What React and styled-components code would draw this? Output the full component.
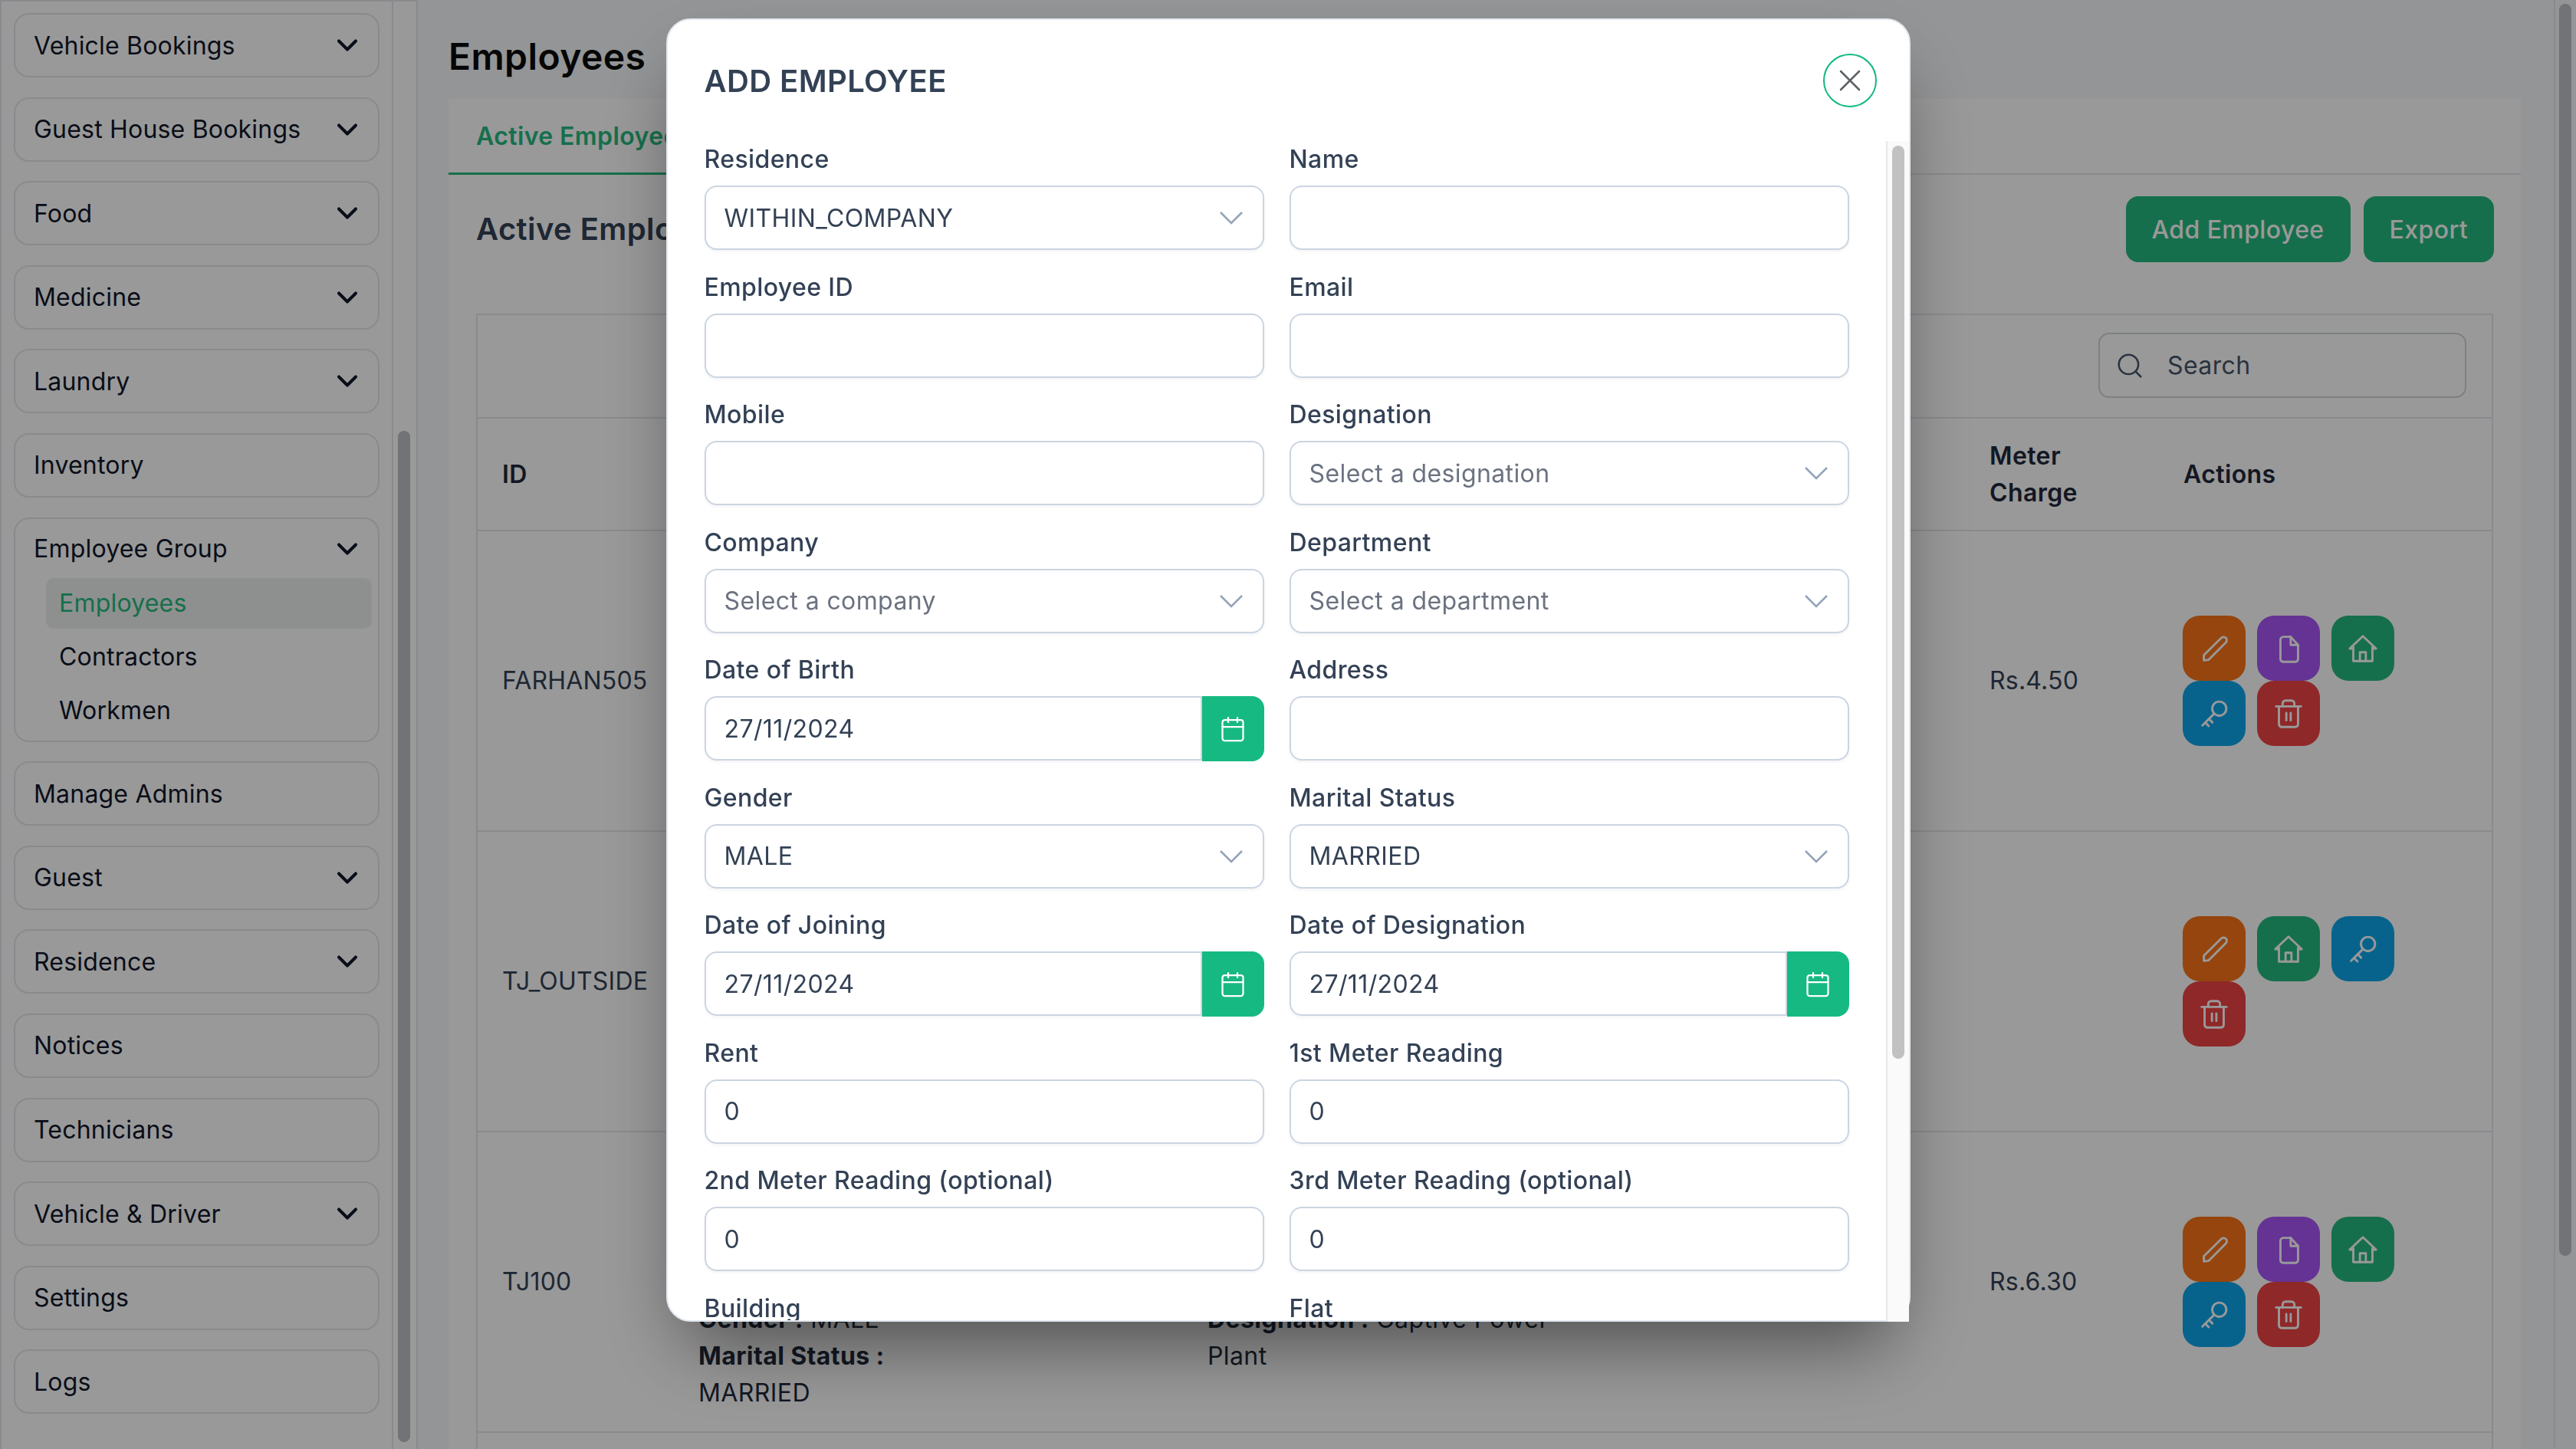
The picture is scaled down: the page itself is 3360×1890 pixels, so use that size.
import React from "react";
import styled, { createGlobalStyle } from "styled-components";
import { Calendar, ChevronDown, Search, X } from "lucide-react";

const GlobalStyle = createGlobalStyle`
  html, body {
    margin: 0;
    height: 100%;
    overflow: hidden;
    font-family: Inter, "Liberation Sans", sans-serif;
    letter-spacing: 0.4px;
    color: #334155;
  }
  * { box-sizing: border-box; }
  input, select, button { letter-spacing: inherit; }
`;

const GREEN = "#25b97f";

const Page = styled.div`
  width: 3360px;
  height: 1890px;
  display: flex;
  background: #f7f8fa;
  overflow: hidden;
`;

const Sidebar = styled.aside`
  width: 545px;
  height: 100%;
  flex: none;
  display: flex;
  background: #fff;
  border-top: 2px solid #e5e7eb;
  border-left: 2px solid #e5e7eb;
  border-right: 2px solid #e5e7eb;
`;

const SideNav = styled.nav`
  width: 511px;
  flex: none;
  display: flex;
  flex-direction: column;
  gap: 25.6px;
  padding: 15px 16px 0;
  letter-spacing: 0.2px;
  border-right: 2px solid #e5e7eb;
`;

const NavItem = styled.div`
  height: 84px;
  flex: none;
  display: flex;
  align-items: center;
  justify-content: space-between;
  padding: 0 18px 0 24px;
  border: 2px solid #e5e7eb;
  border-radius: 20px;
  font-size: 32px;
  color: #0f172a;
`;

const NavGroup = styled.div`
  flex: none;
  height: 293px;
  padding: 0 8px 5px 0;
  border: 2px solid #e5e7eb;
  border-radius: 20px;
  font-size: 32px;
  color: #0f172a;
`;

const GroupHead = styled.div`
  height: 77px;
  padding: 1px 10px 0 24px;
  display: flex;
  align-items: center;
  justify-content: space-between;
`;

const SubList = styled.div`
  display: flex;
  flex-direction: column;
  gap: 4px;
  margin-left: 40px;
`;

const SubItem = styled.div`
  height: 66px;
  display: flex;
  align-items: center;
  padding-left: 17px;
  border-radius: 10px;
  background: ${({ $active }) => ($active ? "#edf1ee" : "transparent")};
  color: ${({ $active }) => ($active ? GREEN : "#0f172a")};
`;

const Rail = styled.div`
  flex: 1;
  padding: 0 6px;
`;

const RailThumb = styled.div`
  width: 16px;
  margin-top: ${({ $top }) => $top}px;
  height: ${({ $height }) => $height}px;
  border-radius: 8px;
  background: #bec0c6;
`;

const PageRail = styled.div`
  width: 29px;
  flex: none;
  padding-left: 5px;
  border-left: 2px solid #e5e7eb;
`;

const Main = styled.main`
  flex: 1;
  min-width: 0;
  padding: 38px 43px 0 40px;
  display: flex;
  flex-direction: column;
`;

const PageTitle = styled.h1`
  margin: 0 0 19px;
  font-size: 48px;
  line-height: 72px;
  font-weight: 600;
  color: #0a0a0a;
`;

const Card = styled.section`
  flex: 1;
  min-height: 0;
  background: #fff;
  overflow: hidden;
`;

const TabBar = styled.div`
  height: 99px;
  display: flex;
  border-bottom: 2px solid #e5e7eb;
`;

const Tab = styled.div`
  height: 99px;
  padding: 0 36px;
  display: flex;
  align-items: center;
  font-size: 32px;
  font-weight: 600;
  color: ${GREEN};
  border-bottom: 3px solid ${GREEN};
`;

const SectionHead = styled.div`
  height: 181px;
  padding: 28px 35px 0 36px;
  display: flex;
  justify-content: space-between;
`;

const SectionTitle = styled.h2`
  margin: 0;
  height: 86px;
  line-height: 86px;
  font-size: 40px;
  font-weight: 600;
  color: #334155;
`;

const HeadButtons = styled.div`
  display: flex;
  gap: 17px;
`;

const GreenButton = styled.button`
  height: 86px;
  padding: 0 34px;
  border: 0;
  border-radius: 16px;
  background: ${GREEN};
  color: #fff;
  font: 500 32px Inter, sans-serif;
`;

const TableBox = styled.div`
  margin: 0 36px 0 36px;
  border: 2px solid #e5e7eb;
`;

const SearchRow = styled.div`
  height: 133px;
  padding: 23px 33px 0 0;
  display: flex;
  justify-content: flex-end;
`;

const SearchBox = styled.div`
  width: 480px;
  height: 85px;
  display: flex;
  align-items: center;
  gap: 30px;
  padding-left: 20px;
  border: 2px solid #d1d5db;
  border-radius: 14px;
  font-size: 32px;
  color: #475569;
`;

const Row = styled.div`
  display: grid;
  grid-template-columns: 256px 1684px 253px 1fr;
  height: ${({ $height }) => $height}px;
  border-top: 2px solid #e5e7eb;
`;

const HeadCell = styled.div`
  padding: 0 32px;
  align-self: center;
  font-size: 32px;
  line-height: 48px;
  font-weight: 600;
  color: #1e293b;
`;

const Cell = styled.div`
  padding: 0 32px;
  align-self: center;
  font-size: 32px;
  line-height: 48px;
  letter-spacing: 0.2px;
  color: #334155;
`;

const DetailsCell = styled.div`
  align-self: end;
  padding: 0 32px 26px;
  display: grid;
  grid-template-columns: 664px 1fr;
  font-size: 32px;
  line-height: 48px;
  color: #1e293b;
`;

const DetailText = styled.div`
  max-width: ${({ $max }) => $max}px;
`;

const Strong = styled.strong`
  font-weight: 700;
`;

const Actions = styled.div`
  display: flex;
  flex-wrap: wrap;
  column-gap: 15px;
  width: 300px;
  margin-left: -1px;
`;

const ActionButton = styled.button`
  width: 82px;
  height: 85px;
  padding: 0;
  border: 0;
  border-radius: 22px;
  display: flex;
  align-items: center;
  justify-content: center;
  color: #fff;
  background: ${({ $bg }) => $bg};
`;

const Overlay = styled.div`
  position: fixed;
  inset: 0;
  display: flex;
  justify-content: center;
  align-items: flex-start;
  padding-top: 24px;
  background: rgba(0, 0, 0, 0.4);
`;

const Modal = styled.div`
  width: 1623px;
  height: 1700px;
  display: flex;
  flex-direction: column;
  background: #fff;
  border: 2px solid #e2e8f0;
  border-radius: 32px;
  box-shadow: 0 50px 100px -24px rgba(0, 0, 0, 0.5);
`;

const ModalHead = styled.div`
  height: 158px;
  flex: none;
  display: flex;
  align-items: center;
  justify-content: space-between;
  padding: 0 42px 0 48px;
`;

const ModalTitle = styled.h3`
  margin: 0;
  font-size: 40px;
  font-weight: 600;
  color: #334155;
`;

const CloseButton = styled.button`
  width: 70px;
  height: 70px;
  padding: 0;
  border: 2px solid #10b981;
  border-radius: 50%;
  background: #fff;
  color: #5f6368;
  display: flex;
  align-items: center;
  justify-content: center;
`;

const ModalBody = styled.div`
  flex: 1;
  min-height: 0;
  display: flex;
`;

const FormScroll = styled.div`
  flex: 1;
  min-width: 0;
  overflow: hidden;
  padding-left: 48px;
`;

const FormRail = styled.div`
  width: 30px;
  flex: none;
  margin-bottom: -2px;
  padding-left: 6px;
  background: #fafafa;
  border-left: 2px solid #e8e8e8;
`;

const FormThumb = styled.div`
  width: 16px;
  height: 1191px;
  margin-top: 6px;
  border-radius: 8px;
  background: #c1c1c1;
`;

const FormGrid = styled.div`
  display: grid;
  grid-template-columns: 730px 730px;
  column-gap: 33px;
  row-gap: 24.5px;
`;

const Field = styled.div`
  display: flex;
  flex-direction: column;
`;

const Label = styled.label`
  height: 48px;
  margin-bottom: 10px;
  font-size: 32px;
  line-height: 48px;
  font-weight: 500;
  color: #334155;
`;

const controlCss = `
  width: 100%;
  height: 84px;
  padding: 0 24px;
  background: #fff;
  border: 2px solid #cbd5e1;
  border-radius: 16px;
  box-shadow: 0 2px 4px rgba(15, 23, 42, 0.05);
  font: 400 32px Inter, sans-serif;
  color: #334155;
  outline: none;
`;

const TextInput = styled.input`
  ${controlCss}
`;

const SelectWrap = styled.div`
  position: relative;
  height: 84px;
`;

const Select = styled.select`
  ${controlCss}
  appearance: none;
  color: ${({ $placeholder }) => ($placeholder ? "#6b7280" : "#334155")};
`;

const SelectArrow = styled.svg`
  position: absolute;
  right: 28px;
  top: 34px;
  width: 30px;
  height: 17px;
  fill: none;
  stroke: #94a3b8;
  stroke-width: 2.6;
  pointer-events: none;
`;

const DateRow = styled.div`
  display: flex;
  height: 84px;
`;

const DateInput = styled.input`
  ${controlCss}
  flex: 1;
  min-width: 0;
  border-radius: 16px 0 0 16px;
`;

const DateButton = styled.button`
  width: 81px;
  height: 85px;
  flex: none;
  padding: 0;
  border: 0;
  border-radius: 0 16px 16px 0;
  background: #16b981;
  color: #fff;
  display: flex;
  align-items: center;
  justify-content: center;
`;

const ActionIcon = styled.svg`
  width: 46px;
  height: 46px;
  fill: none;
  stroke: currentColor;
  stroke-width: 1.5;
  stroke-linecap: round;
  stroke-linejoin: round;
`;

const ICONS = {
  edit: (
    <>
      <path d="M5 20v-3.6L17 4.6a2.2 2.2 0 0 1 3.1 3.1L8.3 19.6 5 20z" />
    </>
  ),
  file: (
    <>
      <path d="M13.5 4H8.5A2 2 0 0 0 6.500 6v13a2 2 0 0 0 2 2h8a2 2 0 0 0 2-2V9.500z" />
      <path d="M13.500 4v5.500h5" />
    </>
  ),
  home: (
    <>
      <path d="M4.500 12H3l9-8.500 9 8.500h-1.500" />
      <path d="M5.500 11v9.500h13V11" />
      <path d="M10 20.500v-6h4v6" />
    </>
  ),
  key: (
    <>
      <circle cx="15.500" cy="8.500" r="4.800" />
      <path d="M11.800 12.200 4 20" />
      <path d="M8.500 15.500l2.300 2.300" />
      <path d="M6 18l2.300 2.300" />
    </>
  ),
  trash: (
    <>
      <path d="M3.500 7h17" />
      <path d="M5.500 7v12a2 2 0 0 0 2 2h9a2 2 0 0 0 2-2V7" />
      <path d="M8 7V5a2 2 0 0 1 2-2h4a2 2 0 0 1 2 2v2" />
      <path d="M10.500 11.500v5" />
      <path d="M13.500 11.500v5" />
    </>
  ),
};

const ACTION_COLORS = {
  edit: "#f97316",
  file: "#a855f7",
  home: GREEN,
  key: "#0ea5e9",
  trash: "#ef4444",
};

const NAV_TOP = [
  ["Vehicle Bookings", true],
  ["Guest House Bookings", true],
  ["Food", true],
  ["Medicine", true],
  ["Laundry", true],
  ["Inventory", false],
];

const NAV_BOTTOM = [
  ["Manage Admins", false],
  ["Guest", true],
  ["Residence", true],
  ["Notices", false],
  ["Technicians", false],
  ["Vehicle & Driver", true],
  ["Settings", false],
  ["Logs", false],
];

const FIELDS = [
  { label: "Residence", type: "select", value: "WITHIN_COMPANY" },
  { label: "Name" },
  { label: "Employee ID" },
  { label: "Email" },
  { label: "Mobile" },
  { label: "Designation", type: "select", placeholder: "Select a designation" },
  { label: "Company", type: "select", placeholder: "Select a company" },
  { label: "Department", type: "select", placeholder: "Select a department" },
  { label: "Date of Birth", type: "date", value: "27/11/2024" },
  { label: "Address" },
  { label: "Gender", type: "select", value: "MALE" },
  { label: "Marital Status", type: "select", value: "MARRIED" },
  { label: "Date of Joining", type: "date", value: "27/11/2024" },
  { label: "Date of Designation", type: "date", value: "27/11/2024" },
  { label: "Rent", value: "0" },
  { label: "1st Meter Reading", value: "0" },
  { label: "2nd Meter Reading (optional)", value: "0" },
  { label: "3rd Meter Reading (optional)", value: "0" },
  { label: "Building", type: "select", placeholder: "Select a building" },
  { label: "Flat", type: "select", placeholder: "Select a flat" },
];

const NavEntry = ({ label, arrow }) => (
  <NavItem>
    {label}
    {arrow && <ChevronDown size={44} strokeWidth={2.2} color="#0f172a" />}
  </NavItem>
);

const FormField = ({ label, type, value, placeholder }) => {
  let control = <TextInput defaultValue={value} />;
  if (type === "select") {
    control = (
      <SelectWrap>
        <Select $placeholder={!!placeholder} defaultValue={value || placeholder}>
          <option>{value || placeholder}</option>
        </Select>
        <SelectArrow viewBox="0 0 30 17">
          <polyline points="1,1 15,15 29,1" />
        </SelectArrow>
      </SelectWrap>
    );
  }
  if (type === "date") {
    control = (
      <DateRow>
        <DateInput defaultValue={value} />
        <DateButton>
          <Calendar size={36} strokeWidth={1.5} />
        </DateButton>
      </DateRow>
    );
  }
  return (
    <Field>
      <Label>{label}</Label>
      {control}
    </Field>
  );
};

const ActionGroup = ({ items }) => (
  <Cell>
    <Actions>
      {items.map((name) => (
        <ActionButton key={name} $bg={ACTION_COLORS[name]}>
          <ActionIcon viewBox="0 0 24 24">{ICONS[name]}</ActionIcon>
        </ActionButton>
      ))}
    </Actions>
  </Cell>
);

export default function App() {
  return (
    <>
      <GlobalStyle />
      <Page>
        <Sidebar>
          <SideNav>
            {NAV_TOP.map(([label, arrow]) => (
              <NavEntry key={label} label={label} arrow={arrow} />
            ))}
            <NavGroup>
              <GroupHead>
                Employee Group
                <ChevronDown size={44} strokeWidth={2.2} color="#0f172a" />
              </GroupHead>
              <SubList>
                <SubItem $active>Employees</SubItem>
                <SubItem>Contractors</SubItem>
                <SubItem>Workmen</SubItem>
              </SubList>
            </NavGroup>
            {NAV_BOTTOM.map(([label, arrow]) => (
              <NavEntry key={label} label={label} arrow={arrow} />
            ))}
          </SideNav>
          <Rail>
            <RailThumb $top={560} $height={1319} />
          </Rail>
        </Sidebar>

        <Main>
          <PageTitle>Employees</PageTitle>
          <Card>
            <TabBar>
              <Tab>Active Employees</Tab>
            </TabBar>
            <SectionHead>
              <SectionTitle>Active Employees</SectionTitle>
              <HeadButtons>
                <GreenButton>Add Employee</GreenButton>
                <GreenButton>Export</GreenButton>
              </HeadButtons>
            </SectionHead>
            <TableBox>
              <SearchRow>
                <SearchBox>
                  <Search size={38} strokeWidth={1.6} color="#475569" />
                  Search
                </SearchBox>
              </SearchRow>
              <Row $height={147}>
                <HeadCell>ID</HeadCell>
                <HeadCell>Details</HeadCell>
                <HeadCell>Meter Charge</HeadCell>
                <HeadCell>Actions</HeadCell>
              </Row>
              <Row $height={392}>
                <Cell>FARHAN505</Cell>
                <div />
                <Cell>Rs.4.50</Cell>
                <ActionGroup items={["edit", "file", "home", "key", "trash"]} />
              </Row>
              <Row $height={392}>
                <Cell>TJ_OUTSIDE</Cell>
                <div />
                <div />
                <ActionGroup items={["edit", "home", "key", "trash"]} />
              </Row>
              <Row $height={392}>
                <Cell>TJ100</Cell>
                <DetailsCell>
                  <DetailText $max={340}>
                    <Strong>Gender :</Strong> MALE
                    <br />
                    <Strong>Marital Status :</Strong> MARRIED
                  </DetailText>
                  <DetailText $max={480}>
                    <Strong>Designation :</Strong> Captive Power Plant
                  </DetailText>
                </DetailsCell>
                <Cell>Rs.6.30</Cell>
                <ActionGroup items={["edit", "file", "home", "key", "trash"]} />
              </Row>
              <Row $height={60} />
            </TableBox>
          </Card>
        </Main>

        <PageRail>
          <RailThumb $top={5} $height={1633} />
        </PageRail>
      </Page>

      <Overlay>
        <Modal>
          <ModalHead>
            <ModalTitle>ADD EMPLOYEE</ModalTitle>
            <CloseButton>
              <X size={48} strokeWidth={1.3} />
            </CloseButton>
          </ModalHead>
          <ModalBody>
            <FormScroll>
              <FormGrid>
                {FIELDS.map((field) => (
                  <FormField key={field.label} {...field} />
                ))}
              </FormGrid>
            </FormScroll>
            <FormRail>
              <FormThumb />
            </FormRail>
          </ModalBody>
        </Modal>
      </Overlay>
    </>
  );
}
